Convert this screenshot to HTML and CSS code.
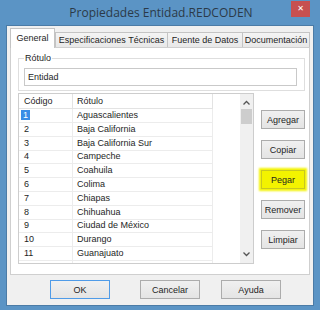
FILE: index.html
```html
<!DOCTYPE html>
<html lang="es">
<head>
    <meta charset="UTF-8">
    <title>Propiedades Entidad.REDCODEN</title>
    <link rel="stylesheet" href="styles.css">
</head>
<body>
    <div class="window">
        <div class="titlebar">
            <span></span>
            <span class="title">Propiedades Entidad.REDCODEN</span>
            <button class="close">&#x2715;</button>
        </div>
        <div class="client">
            <div class="tabs">
                <span class="tab active t-general">General</span>
                <span class="tab t-esp">Especificaciones Técnicas</span>
                <span class="tab t-fuente">Fuente de Datos</span>
                <span class="tab t-doc">Documentación</span>
            </div>
            <div class="panel">
                <fieldset class="group">
                    <legend>Rótulo</legend>
                    <div class="textbox">Entidad</div>
                </fieldset>
                <div class="list-area">
                    <div class="list">
                        <div class="grid">
                            <div class="row head"><span>Código</span><span>Rótulo</span></div>
                            <div class="row"><span><b class="sel">1</b></span><span>Aguascalientes</span></div>
                            <div class="row"><span>2</span><span>Baja California</span></div>
                            <div class="row"><span>3</span><span>Baja California Sur</span></div>
                            <div class="row"><span>4</span><span>Campeche</span></div>
                            <div class="row"><span>5</span><span>Coahuila</span></div>
                            <div class="row"><span>6</span><span>Colima</span></div>
                            <div class="row"><span>7</span><span>Chiapas</span></div>
                            <div class="row"><span>8</span><span>Chihuahua</span></div>
                            <div class="row"><span>9</span><span>Ciudad de México</span></div>
                            <div class="row"><span>10</span><span>Durango</span></div>
                            <div class="row"><span>11</span><span>Guanajuato</span></div>
                            <div class="row rest"><span></span><span></span></div>
                        </div>
                        <div class="scrollbar">
                            <svg class="arrow" width="13" height="12" viewBox="0 0 13 12"><path d="M3.5 7.5 L6.5 4.5 L9.5 7.5" fill="none" stroke="#555" stroke-width="1.3"/></svg>
                            <div class="thumb"></div>
                            <div class="track"></div>
                            <svg class="arrow" width="13" height="12" viewBox="0 0 13 12"><path d="M3.5 4.5 L6.5 7.5 L9.5 4.5" fill="none" stroke="#555" stroke-width="1.3"/></svg>
                        </div>
                    </div>
                    <div class="side-buttons">
                        <button class="btn">Agregar</button>
                        <button class="btn">Copiar</button>
                        <button class="btn marked">Pegar</button>
                        <button class="btn">Remover</button>
                        <button class="btn">Limpiar</button>
                    </div>
                </div>
            </div>
            <div class="footer">
                <button class="btn wide default">OK</button>
                <button class="btn wide cancel">Cancelar</button>
                <button class="btn wide help">Ayuda</button>
            </div>
        </div>
    </div>
</body>
</html>
```

FILE: styles.css
```css
body { margin: 0; font-family: "Liberation Sans", Arial, sans-serif; font-size: 9px; color: #1e1e1e; }
.window { width: 320px; height: 310px; background: #5b94c5; overflow: hidden; }

.titlebar { height: 25px; display: grid; grid-template-columns: 1fr auto 1fr; align-items: start; }
.title { font-family: "Open Sans", sans-serif; font-size: 12px; color: #2b3a48; line-height: 25px; padding-left: 2px; }
.close { justify-self: end; margin: 1px 10px 0 0; width: 19px; height: 16px; border: 0; padding: 0; background: #c75050; color: #fff; font-size: 8px; font-weight: bold; line-height: 16px; font-family: "DejaVu Sans", sans-serif; }

.client { margin: 0 6px; height: 281px; box-sizing: border-box; border: 1px solid #4b7ba6; background: #f0f0f0; }

.tabs { display: flex; align-items: flex-end; height: 21px; padding-left: 3px; }
.tab { height: 14px; line-height: 14px; border: 1px solid #c4c4c4; border-bottom: 0; background: linear-gradient(#f4f4f4, #e8e8e8); text-align: center; margin-right: -1px; white-space: nowrap; }
.tab.active { line-height: 18px; background: #fff; position: relative; z-index: 1; margin-bottom: -1px; height: 19px; }
.t-general { width: 43px; }
.t-esp { width: 111px; margin-left: 1px; }
.t-fuente { width: 74px; }
.t-doc { width: 66px; }

.panel { margin-left: 3px; width: 300px; height: 228px; box-sizing: border-box; border: 1px solid #cfcfcf; background: #fff; padding-top: 5px; }

.group { margin: 0 4px 0 7px; padding: 0 7px 4px 5px; border: 1px solid #dedede; }
.group legend { padding: 0 1px; margin-left: 0; line-height: 11px; }
.textbox { margin-top: 4px; height: 18px; box-sizing: border-box; border: 1px solid #c9c9c9; padding-left: 3px; line-height: 16px; background: #fff; }

.list-area { display: flex; margin-top: 2px; }
.list { margin-left: 7px; width: 236px; height: 171px; box-sizing: border-box; border: 1px solid #cdcdcd; display: flex; }
.grid { width: 221px; overflow: hidden; }
.row { display: grid; grid-template-columns: 54px 140px; height: 13.8px; line-height: 13px; }
.row span { border-right: 1px solid #ececec; border-bottom: 1px solid #ececec; padding-left: 5px; white-space: nowrap; }
.row span + span { padding-left: 4px; }
.row.head { height: 15px; line-height: 14px; }
.row.head span { border-color: #e3e3e3; }
.row.rest { height: 20px; }
.row.rest span { border-bottom: 0; }
.sel { font-weight: normal; background: #3a8ee6; color: #fff; padding: 0 2px; margin-left: -3px; }

.scrollbar { width: 13px; margin-left: auto; background: #f0f0f0; display: flex; flex-direction: column; }
.arrow { display: block; margin-top: 3px; }
.thumb { height: 15px; margin: 0 1px; background: #cdcdcd; }
.track { flex: 1; }
.scrollbar .arrow:last-child { margin: 0 0 3px; }

.side-buttons { display: flex; flex-direction: column; gap: 11px; margin-left: 7px; padding-top: 17px; }
.btn { width: 44px; height: 19px; box-sizing: border-box; border: 1px solid #acacac; background: linear-gradient(#f0f0f0, #e4e4e4); font-family: "Liberation Sans", Arial, sans-serif; font-size: 9px; color: #1e1e1e; padding: 0; }
.btn.marked { background: #f3f300; border-color: #c8c820; box-shadow: 0 0 2px 2px #f3f300; }

.footer { display: flex; padding-top: 5px; }
.btn.wide { width: 60px; }
.default { margin-left: 43px; border-color: #4f9be8; }
.cancel { margin-left: 30px; }
.help { margin-left: 21px; }
```
